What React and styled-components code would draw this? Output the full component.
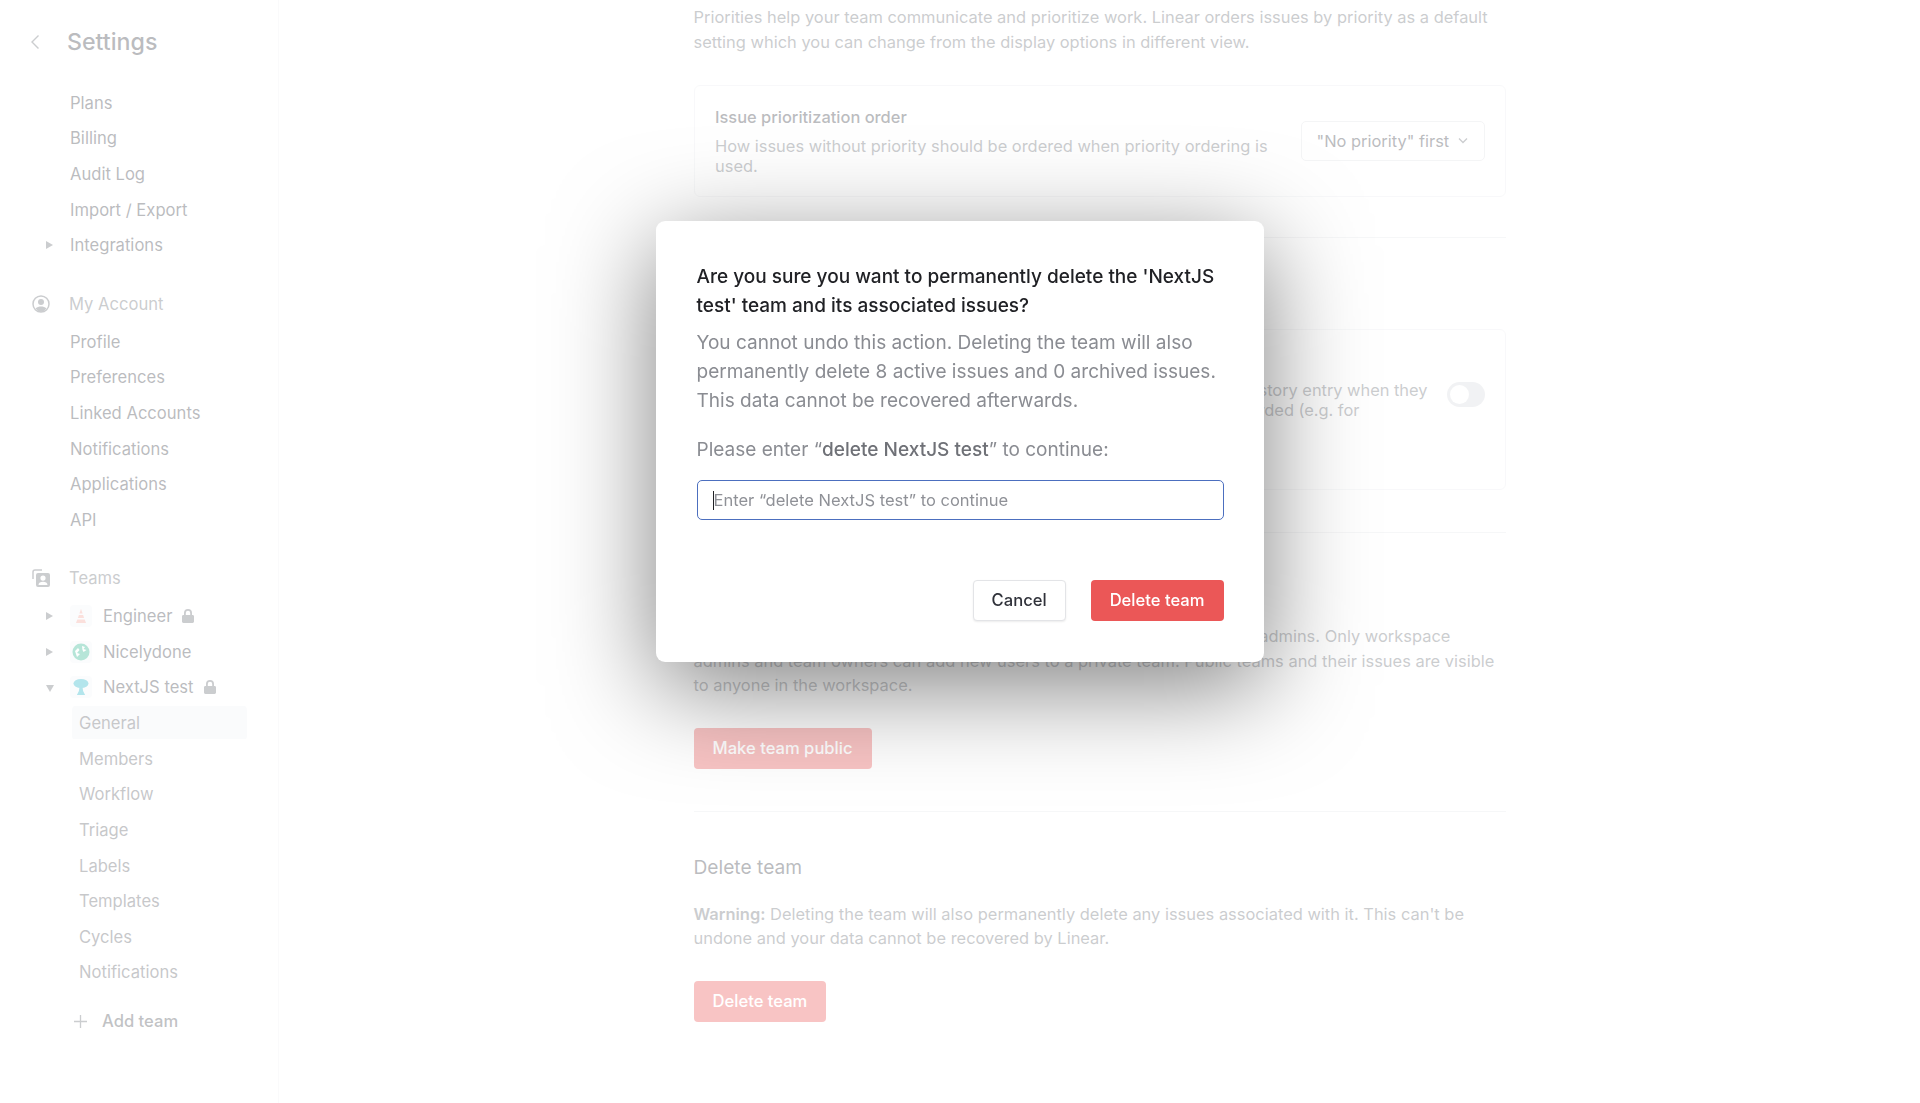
import React from 'react'
import styled, { createGlobalStyle } from 'styled-components'

const GlobalStyle = createGlobalStyle`
  html, body {
    margin: 0;
    padding: 0;
    background: #fff;
    overflow: hidden;
  }
  body {
    font-family: Inter, 'Liberation Sans', sans-serif;
    color: #3c4149;
  }
  * {
    box-sizing: border-box;
  }
`

const Page = styled.div`
  display: flex;
  height: 1103px;
  overflow: hidden;
`

const Sidebar = styled.nav`
  flex: 0 0 279px;
  height: 100%;
  padding: 0 32px 0 0;
  border-right: 1px solid #f0f0f2;
`

const SidebarHeader = styled.div`
  display: flex;
  align-items: center;
  height: 85px;
  padding-left: 30px;
  padding-bottom: 2px;
`

const BackIcon = styled.svg`
  width: 10px;
  height: 16px;
  margin-right: 27px;
  fill: none;
  stroke: #6b6f76;
  stroke-width: 1.4;
`

const SidebarTitle = styled.h1`
  margin: 0;
  font-size: 23.2px;
  font-weight: 500;
  color: #3c4149;
`

const Group = styled.div`
  margin-bottom: ${props => props.$gap || 0}px;
`

const GroupHeader = styled.div`
  display: flex;
  align-items: center;
  height: 35.6px;
  margin-bottom: 2px;
  padding-left: 32px;
  font-size: 16.6px;
  color: #6b6f76;
  svg {
    width: 18px;
    height: 18px;
    margin-right: 19px;
    flex: none;
  }
`

const Item = styled.div`
  position: relative;
  display: flex;
  align-items: center;
  height: 35.65px;
  padding-left: 70px;
  font-size: 16.6px;
  color: #3c4149;
`

const Caret = styled.span`
  position: absolute;
  left: 46px;
  top: 13.8px;
  width: 0;
  height: 0;
  border-top: 4px solid transparent;
  border-bottom: 4px solid transparent;
  border-left: 7px solid #6b6f76;
  ${props => props.$open && `
    left: 45.5px;
    top: 15px;
    border-left: 4.5px solid transparent;
    border-right: 4.5px solid transparent;
    border-top: 7px solid #6b6f76;
    border-bottom: 0;
  `}
`

const TeamBadge = styled.span`
  display: flex;
  align-items: center;
  justify-content: center;
  width: 22px;
  height: 22px;
  margin-right: 11px;
  border-radius: 4px;
  background: #f4f5f8;
  svg {
    width: 18px;
    height: 18px;
  }
`

const LockIcon = styled.svg`
  width: 12px;
  height: 14px;
  margin-left: 10px;
  fill: #6b6f76;
`

const SubItem = styled.div`
  display: flex;
  align-items: center;
  height: 35.65px;
  margin-left: 72px;
  margin-right: -1px;
  padding-left: 7px;
  font-size: 16.6px;
  color: #5e6168;
  border-radius: 5px;
  background: ${props => (props.$active ? 'linear-gradient(#f0f2f7, #f0f2f7) center / 100% 33px no-repeat' : 'none')};
`

const AddTeam = styled.div`
  display: flex;
  align-items: center;
  height: 35.6px;
  margin-top: 13px;
  padding-left: 74px;
  font-size: 16.6px;
  font-weight: 500;
  color: #4d5158;
  svg {
    width: 13px;
    height: 13px;
    margin-right: 15px;
    stroke: #6b6f76;
    stroke-width: 1.3;
  }
`

const Main = styled.main`
  flex: 1;
  display: flex;
  justify-content: center;
  padding-top: 5px;
`

const Content = styled.div`
  width: 812px;
`

const Text = styled.p`
  margin: ${props => props.$top || 0}px 0 0;
  font-size: 16.45px;
  line-height: 24.5px;
  color: #6b6f76;
  b {
    font-weight: 600;
  }
`

const Card = styled.div`
  display: flex;
  align-items: center;
  gap: 20px;
  margin-top: ${props => props.$top}px;
  padding: 19px 20px ${props => 20 + (props.$extra || 0)}px 20.500px;
  border: 1px solid #ebecef;
  border-radius: 6px;
`

const CardText = styled.div`
  flex: 1;
  min-width: 0;
`

const CardTitle = styled.div`
  margin-bottom: 7px;
  font-size: 16.43px;
  font-weight: 500;
  line-height: 24px;
  color: #3c4149;
`

const CardDesc = styled.div`
  font-size: 16.43px;
  line-height: 20px;
  color: #6b6f76;
`

const HistoryDesc = styled(CardDesc)`
  white-space: nowrap;
  letter-spacing: -0.03px;
`

const Select = styled.div`
  display: flex;
  flex: none;
  align-items: center;
  justify-content: space-between;
  width: 184px;
  height: 40px;
  padding: 0 16px 0 15px;
  border: 1px solid #dfe1e4;
  border-radius: 5px;
  font-size: 16.43px;
  color: #3c4149;
  svg {
    width: 10px;
    height: 7px;
    fill: none;
    stroke: #6b6f76;
    stroke-width: 1.3;
  }
`

const Toggle = styled.div`
  flex: none;
  width: 38px;
  height: 25px;
  padding: 3px;
  border-radius: 13px;
  background: #d8dadf;
  &::before {
    content: '';
    display: block;
    width: 19px;
    height: 19px;
    border-radius: 50%;
    background: #fff;
  }
`

const Divider = styled.hr`
  margin: ${props => props.$top}px 0 0;
  border: 0;
  border-top: 1px solid #e6e7ea;
`

const Heading = styled.h2`
  margin: ${props => props.$top}px 0 0;
  font-size: 19.2px;
  font-weight: 400;
  line-height: 24px;
  color: #3c4149;
`

const DangerButton = styled.button`
  display: block;
  height: 41px;
  margin-top: ${props => props.$top || 0}px;
  padding: 0 19px;
  border: 0;
  border-radius: 4px;
  background: #eb5757;
  color: #fff;
  font-family: inherit;
  font-size: 16.6px;
  font-weight: 500;
`

const Overlay = styled.div`
  position: fixed;
  inset: 0;
  display: flex;
  align-items: flex-start;
  justify-content: center;
  padding-top: 221px;
  background: rgba(255, 255, 255, 0.65);
`

const Dialog = styled.div`
  width: 608px;
  height: 441px;
  padding: 41px 40.5px;
  border-radius: 9px;
  background: #fff;
  box-shadow: 0 24px 100px rgba(0, 0, 0, 0.5);
`

const DialogTitle = styled.div`
  font-size: 19px;
  font-weight: 500;
  line-height: 29.2px;
  color: #202125;
`

const DialogText = styled.div`
  margin-top: ${props => props.$top}px;
  font-size: 19.05px;
  line-height: 29px;
  color: #8a8c92;
  b {
    font-weight: 500;
    color: #6f7177;
  }
`

const InputWrap = styled.div`
  position: relative;
  margin-top: 15.5px;
  &::before {
    content: '';
    position: absolute;
    left: 16px;
    top: 11px;
    width: 1px;
    height: 19px;
    background: #202125;
  }
`

const Input = styled.input`
  display: block;
  width: 100%;
  height: 40px;
  padding: 0 16px;
  border: 1.5px solid #4c6fbf;
  border-radius: 5px;
  outline: 0;
  font-family: inherit;
  font-size: 16.55px;
  color: #202125;
  &::placeholder {
    color: #8f9197;
    opacity: 1;
  }
`

const DialogActions = styled.div`
  display: flex;
  justify-content: flex-end;
  gap: 25px;
  margin-top: 60px;
`

const CancelButton = styled.button`
  height: 41px;
  width: 93px;
  border: 1px solid #e3e4e7;
  border-radius: 4px;
  background: #fff;
  box-shadow: 0 1px 2px rgba(0, 0, 0, 0.08);
  color: #30323a;
  font-family: inherit;
  font-size: 16.6px;
  font-weight: 500;
`

const Lock = () => (
  <LockIcon viewBox="0 0 12 14">
    <path d="M2 6V4a4 4 0 0 1 8 0v2h.6c.8 0 1.4.6 1.4 1.4v5.2c0 .8-.6 1.4-1.4 1.4H1.4C.6 14 0 13.4 0 12.6V7.4C0 6.6.6 6 1.4 6H2zm1.8 0h4.4V4a2.2 2.2 0 0 0-4.4 0v2z" />
  </LockIcon>
)

const AccountIcon = () => (
  <svg viewBox="0 0 18 18">
    <circle cx="9" cy="9" r="8" fill="none" stroke="#6b6f76" strokeWidth="1.5" />
    <circle cx="9" cy="7" r="3" fill="#6b6f76" />
    <path d="M3.6 13.6C5 11.8 7 11.4 9 11.4s4 .4 5.4 2.2A8 8 0 0 1 9 17a8 8 0 0 1-5.400-3.400z" fill="#6b6f76" />
  </svg>
)

const TeamsIcon = () => (
  <svg viewBox="0 0 18 18">
    <path d="M1 10V3a2 2 0 0 1 2-2h7" fill="none" stroke="#6b6f76" strokeWidth="1.5" />
    <path d="M6 4h10a2 2 0 0 1 2 2v10a2 2 0 0 1-2 2H6a2 2 0 0 1-2-2V6a2 2 0 0 1 2-2zm5 2.500a2.600 2.600 0 1 0 0 5.200 2.600 2.600 0 0 0 0-5.200zM6.500 16h9c0-2.200-2-3.200-4.500-3.200S6.500 13.800 6.500 16z" fill="#6b6f76" fillRule="evenodd" />
  </svg>
)

const EngineerIcon = () => (
  <svg viewBox="0 0 18 18">
    <path d="M9 2l1.600 4.500H7.400z" fill="#f2a59c" />
    <path d="M6.900 8h4.200l1 3H5.900z" fill="#f2a59c" />
    <path d="M5.300 12.500h7.400l1.300 3.500H4z" fill="#f2a59c" />
  </svg>
)

const NicelydoneIcon = () => (
  <svg viewBox="0 0 18 18">
    <circle cx="9" cy="9" r="8.500" fill="#2fb58f" />
    <path d="M3 8l3-3 1.500 2L5 10l3 1-3 3zM10 3l3 1-1.500 2 3 1-3 2-1-2z" fill="#fff" />
  </svg>
)

const NextIcon = () => (
  <svg viewBox="0 0 18 18">
    <ellipse cx="9" cy="5.500" rx="7.500" ry="4.500" fill="#27b5c9" />
    <path d="M7.500 9h3l.6 4 2 4H4.900l2-4z" fill="#27b5c9" />
  </svg>
)

const accountItems = ['Profile', 'Preferences', 'Linked Accounts', 'Notifications', 'Applications', 'API']
const teamItems = ['General', 'Members', 'Workflow', 'Triage', 'Labels', 'Templates', 'Cycles', 'Notifications']

export default function App () {
  return (
    <>
      <GlobalStyle />
      <Page>
        <Sidebar>
          <SidebarHeader>
            <BackIcon viewBox="0 0 10 16">
              <path d="M8.500 1.500L2 8l6.500 6.500" />
            </BackIcon>
            <SidebarTitle>Settings</SidebarTitle>
          </SidebarHeader>
          <Group $gap={23}>
            <Item>Plans</Item>
            <Item>Billing</Item>
            <Item>Audit Log</Item>
            <Item>Import / Export</Item>
            <Item><Caret />Integrations</Item>
          </Group>
          <Group $gap={23}>
            <GroupHeader><AccountIcon />My Account</GroupHeader>
            {accountItems.map(item => <Item key={item}>{item}</Item>)}
          </Group>
          <Group>
            <GroupHeader><TeamsIcon />Teams</GroupHeader>
            <Item><Caret /><TeamBadge><EngineerIcon /></TeamBadge>Engineer<Lock /></Item>
            <Item><Caret /><TeamBadge><NicelydoneIcon /></TeamBadge>Nicelydone</Item>
            <Item><Caret $open /><TeamBadge><NextIcon /></TeamBadge>NextJS test<Lock /></Item>
            {teamItems.map(item => <SubItem key={item} $active={item === 'General'}>{item}</SubItem>)}
          </Group>
          <AddTeam>
            <svg viewBox="0 0 13 13"><path d="M6.500 0v13M0 6.500h13" /></svg>
            Add team
          </AddTeam>
        </Sidebar>
        <Main>
          <Content>
            <Text>
              Priorities help your team communicate and prioritize work. Linear orders issues by priority as a default setting which you can change from the display options in different view.
            </Text>
            <Card $top={31}>
              <CardText>
                <CardTitle>Issue prioritization order</CardTitle>
                <CardDesc>How issues without priority should be ordered when priority ordering is used.</CardDesc>
              </CardText>
              <Select>
                "No priority" first
                <svg viewBox="0 0 10 7"><path d="M1 1.500l4 4 4-4" /></svg>
              </Select>
            </Card>
            <Divider $top={40} />
            <Heading $top={43}>Issue history</Heading>
            <Card $top={24} $extra={29}>
              <CardText>
                <CardTitle>Detailed issue history</CardTitle>
                <HistoryDesc>
                  Issue's activity is grouped together by default unless you add a new history entry when they<br />
                  are all changed after something about the issue has already been recorded (e.g. for<br />
                  status changes).
                </HistoryDesc>
              </CardText>
              <Toggle />
            </Card>
            <Divider $top={42} />
            <Heading $top={43}>Private team</Heading>
            <Text $top={24}>
              Private teams and their issues are only accessible to team members and admins. Only workspace admins and team owners can add new users to a private team. Public teams and their issues are visible to anyone in the workspace.
            </Text>
            <DangerButton $top={30}>Make team public</DangerButton>
            <Divider $top={42} />
            <Heading $top={43}>Delete team</Heading>
            <Text $top={23}>
              <b>Warning:</b> Deleting the team will also permanently delete any issues associated with it. This can't be undone and your data cannot be recovered by Linear.
            </Text>
            <DangerButton $top={30}>Delete team</DangerButton>
          </Content>
        </Main>
      </Page>
      <Overlay>
        <Dialog>
          <DialogTitle>Are you sure you want to permanently delete the 'NextJS test' team and its associated issues?</DialogTitle>
          <DialogText $top={8}>
            You cannot undo this action. Deleting the team will also permanently delete 8 active issues and 0 archived issues. This data cannot be recovered afterwards.
          </DialogText>
          <DialogText $top={20}>
            Please enter “<b>delete NextJS test</b>” to continue:
          </DialogText>
          <InputWrap>
            <Input placeholder="Enter “delete NextJS test” to continue" />
          </InputWrap>
          <DialogActions>
            <CancelButton>Cancel</CancelButton>
            <DangerButton>Delete team</DangerButton>
          </DialogActions>
        </Dialog>
      </Overlay>
    </>
  )
}
